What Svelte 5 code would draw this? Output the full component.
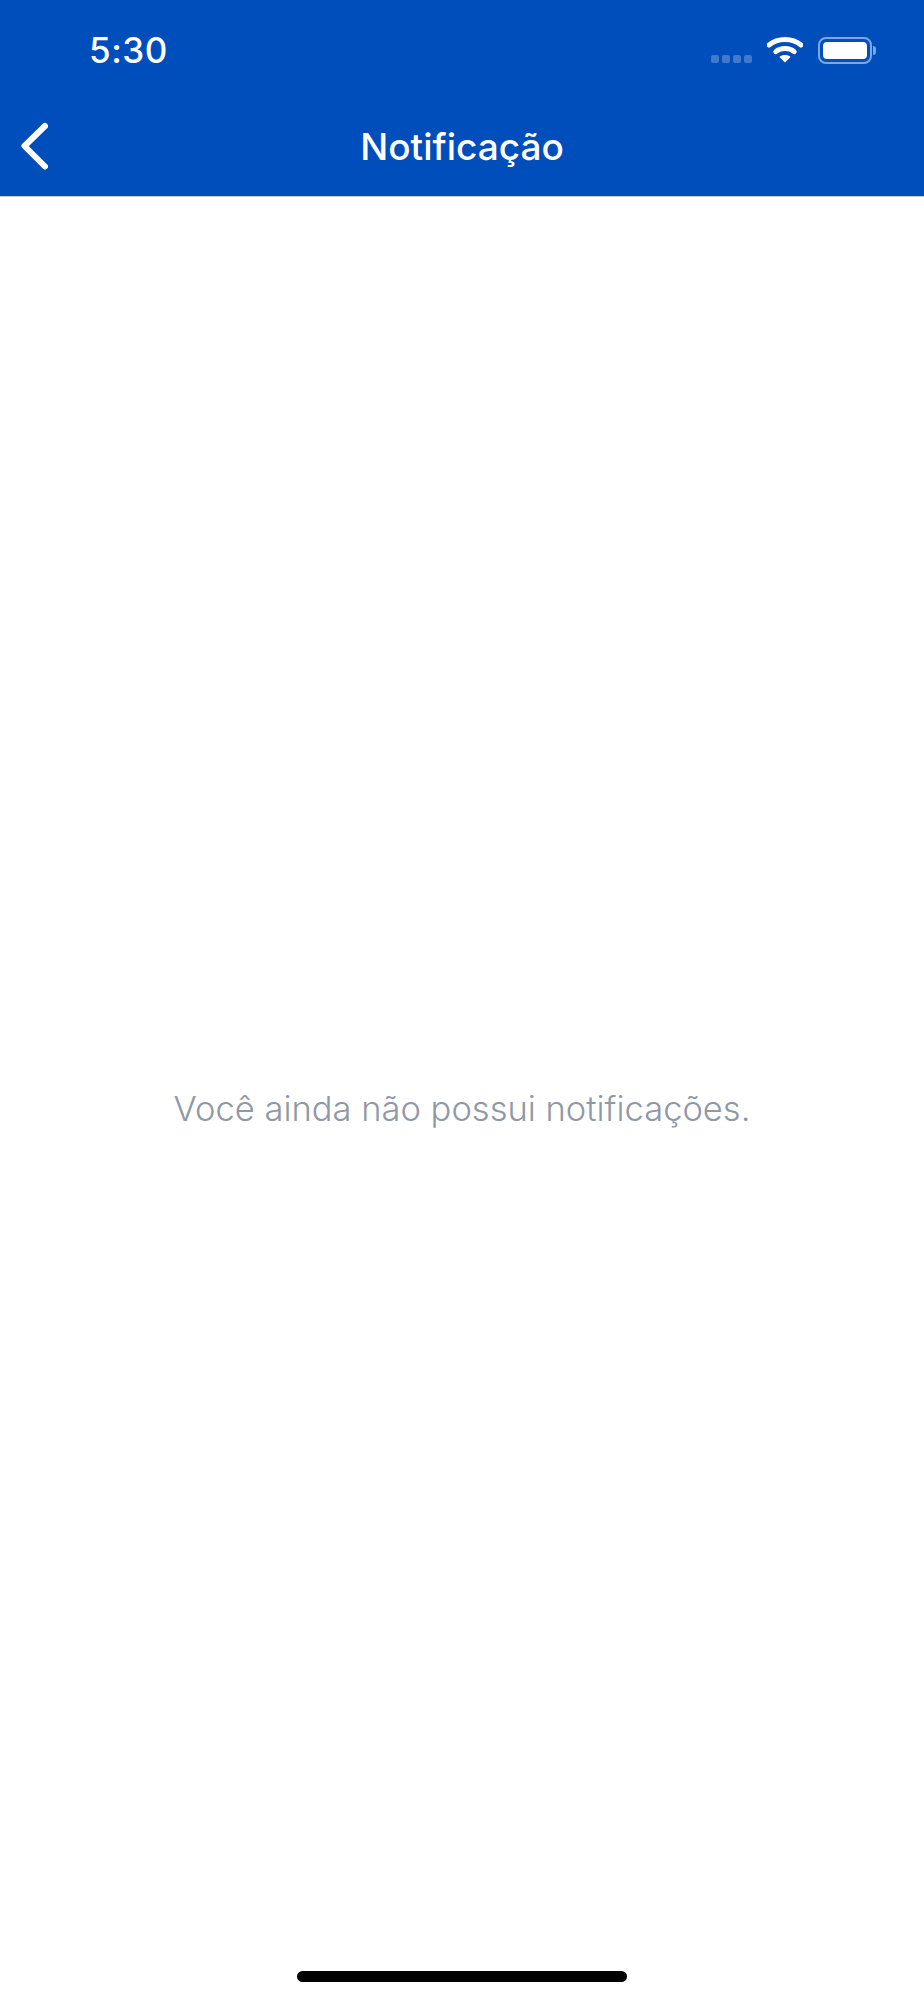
<script>
  const title = 'Notificação';
  const emptyMessage = 'Você ainda não possui notificações.';
  const signalDots = [0, 1, 2, 3];
</script>

<div class="screen">
  <header class="header">
    <div class="status-bar">
      <span class="time">5:30</span>
      <div class="status-icons">
        <div class="signal">
          {#each signalDots as dot (dot)}
            <span class="dot"></span>
          {/each}
        </div>
        <svg class="wifi" width="36" height="27" viewBox="0 0 36 27">
          <path d="M2 9C10.8 1.6 25.2 1.6 34 9" fill="none" stroke="#fff" stroke-width="5" stroke-linecap="round" />
          <path d="M8.8 15.6C13.6 11.6 22.4 11.6 27.2 15.6" fill="none" stroke="#fff" stroke-width="5" stroke-linecap="round" />
          <path d="M12.4 21C15.4 18.4 20.6 18.4 23.6 21L18 26.6Z" fill="#fff" />
        </svg>
        <div class="battery">
          <div class="battery-body"><div class="battery-fill"></div></div>
          <div class="battery-cap"></div>
        </div>
      </div>
    </div>
    <div class="nav-bar">
      <button class="back" aria-label="Voltar">
        <svg width="30" height="48" viewBox="0 0 30 48">
          <path d="M27 4L6.5 24L27 44.5" fill="none" stroke="#fff" stroke-width="6" stroke-linecap="round" stroke-linejoin="round" />
        </svg>
      </button>
      <h1 class="title">{title}</h1>
    </div>
  </header>

  <main class="content">
    <p class="empty">{emptyMessage}</p>
  </main>

  <footer class="home-area">
    <div class="home-indicator"></div>
  </footer>
</div>

<style>
  :global(body) {
    margin: 0;
    background: #fff;
  }

  .screen {
    display: flex;
    flex-direction: column;
    height: 2000px;
    font-family: Inter, "Liberation Sans", sans-serif;
  }

  .header {
    background: #004dbc;
    border-bottom: 1px solid #c9c9c9;
    color: #fff;
  }

  .status-bar {
    display: flex;
    justify-content: space-between;
    align-items: center;
    height: 100px;
    padding: 0 48px 0 89px;
  }

  .time {
    font-size: 35px;
    font-weight: 500;
    letter-spacing: 0.5px;
  }

  .status-icons {
    display: flex;
    align-items: center;
  }

  .signal {
    display: flex;
    gap: 3px;
    margin-right: 15px;
    padding-top: 18px;
  }

  .dot {
    width: 8px;
    height: 8px;
    border-radius: 2px;
    background: rgba(255, 255, 255, 0.25);
  }

  .wifi {
    margin-right: 15px;
    margin-bottom: 2px;
  }

  .battery {
    display: flex;
    align-items: center;
  }

  .battery-body {
    box-sizing: border-box;
    width: 54px;
    height: 27px;
    padding: 3px;
    border: 2px solid rgba(255, 255, 255, 0.5);
    border-radius: 8px;
  }

  .battery-fill {
    height: 100%;
    background: #fff;
    border-radius: 4px;
  }

  .battery-cap {
    width: 3px;
    height: 9px;
    margin-left: 1px;
    background: rgba(255, 255, 255, 0.5);
    border-radius: 0 3px 3px 0;
  }

  .nav-bar {
    display: flex;
    justify-content: center;
    align-items: center;
    position: relative;
    height: 96px;
  }

  .back {
    position: absolute;
    left: 18px;
    top: 22px;
    display: flex;
    padding: 0;
    background: none;
    border: none;
  }

  .title {
    margin: 0;
    font-size: 37px;
    font-weight: 500;
    line-height: 1;
    padding-bottom: 4px;
  }

  .content {
    flex: 1;
    display: flex;
    justify-content: center;
    align-items: center;
    padding-top: 48px;
  }

  .empty {
    margin: 0;
    font-size: 34.5px;
    font-weight: 300;
    color: #8f98a6;
  }

  .home-area {
    display: flex;
    justify-content: center;
    height: 29px;
  }

  .home-indicator {
    width: 330px;
    height: 11px;
    background: #000;
    border-radius: 6px;
  }
</style>
